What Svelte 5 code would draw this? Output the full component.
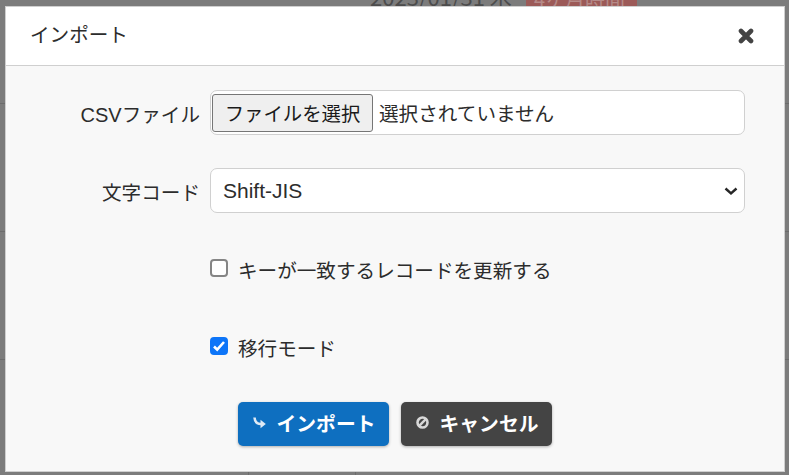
<script>
  let encodings = ['Shift-JIS', 'UTF-8'];
  let encoding = $state('Shift-JIS');
  let update_by_key = $state(false);
  let migrate = $state(true);
</script>

<div class="page">
  <div class="page-head">
    <span class="date">2023/01/31 木</span>
    <span class="badge">4ヶ月時間</span>
  </div>
  <div class="page-row"></div>
  <div class="page-row"></div>
  <div class="page-foot">
    <div class="cell"></div>
    <div class="cell"></div>
  </div>
</div>

<div class="modal">
  <header class="modal-head">
    <h5>インポート</h5>
    <button type="button" class="close" aria-label="閉じる">
      <svg width="16" height="16" viewBox="0 0 16 16">
        <path d="M3 3 L13 13 M13 3 L3 13" stroke="#444" stroke-width="4.6" stroke-linecap="round" fill="none" />
      </svg>
    </button>
  </header>

  <div class="modal-body">
    <div class="field">
      <span class="label"><span class="latin">CSV</span>ファイル</span>
      <div class="file-input">
        <button type="button" class="file-btn">ファイルを選択</button>
        <span class="file-name">選択されていません</span>
      </div>
    </div>

    <div class="field second">
      <span class="label">文字コード</span>
      <select class="select" bind:value={encoding}>
        {#each encodings as e}
          <option value={e}>{e}</option>
        {/each}
      </select>
    </div>

    <label class="check first-check">
      <input type="checkbox" bind:checked={update_by_key} />
      <span>キーが一致するレコードを更新する</span>
    </label>

    <label class="check second-check">
      <input type="checkbox" bind:checked={migrate} />
      <span>移行モード</span>
    </label>

    <div class="actions">
      <button type="button" class="btn primary">
        <svg width="15" height="15" viewBox="0 0 15 15">
          <path d="M2.5 2.5 C2.8 7 5 9 9 9" stroke="#dfeaf5" stroke-width="2.6" fill="none" />
          <path d="M8.5 4.8 L13.8 9 L8.5 13.2 Z" fill="#dfeaf5" />
        </svg>
        インポート
      </button>
      <button type="button" class="btn dark">
        <svg width="15" height="15" viewBox="0 0 15 15">
          <circle cx="7.5" cy="7.5" r="5" stroke="#d8d8d8" stroke-width="2.6" fill="none" />
          <path d="M4.2 10.8 L10.8 4.2" stroke="#d8d8d8" stroke-width="2.4" />
        </svg>
        キャンセル
      </button>
    </div>
  </div>
</div>

<style>
  :global(body) {
    margin: 0;
    height: 475px;
    overflow: hidden;
    background: #7c7c7c;
    font-family: "Noto Sans CJK JP", sans-serif;
    color: #2c2c2c;
  }

  .page {
    width: 789px;
    height: 475px;
    overflow: hidden;
  }

  .page-head {
    height: 104px;
    border-bottom: 1px solid #6c6c6c;
    box-sizing: border-box;
    display: flex;
    align-items: flex-start;
    padding-left: 370px;
    gap: 26px;
  }

  .date {
    width: 130px;
    margin-top: -15px;
    font-size: 22px;
    line-height: 22px;
    color: #4c4c4c;
    white-space: nowrap;
  }

  .badge {
    width: 111px;
    height: 20px;
    box-sizing: border-box;
    margin-top: -12px;
    padding-left: 8px;
    background: #9c5a58;
    color: #b58a88;
    font-size: 20px;
    line-height: 22px;
    white-space: nowrap;
  }

  .page-row {
    height: 128px;
    border-bottom: 1px solid #6c6c6c;
    box-sizing: border-box;
  }

  .page-foot {
    display: flex;
    height: 115px;
    padding-left: 248px;
  }

  .cell {
    width: 106px;
    border-left: 1px solid #6c6c6c;
  }

  .modal {
    position: absolute;
    left: 5px;
    top: 6px;
    width: 780px;
    height: 466px;
    box-sizing: border-box;
    border: 1px solid #cfcfcf;
    background: #f8f8f8;
    display: flex;
    flex-direction: column;
  }

  .modal-head {
    height: 59px;
    flex-shrink: 0;
    box-sizing: border-box;
    background: #fff;
    border-bottom: 1px solid #cfcfcf;
    display: flex;
    align-items: center;
    justify-content: space-between;
    padding: 0 30px 5px 24px;
  }

  h5 {
    margin: 0;
    font-size: 19.6px;
    font-weight: 400;
    line-height: 1.4;
  }

  .close {
    border: 0;
    background: none;
    padding: 0;
    display: flex;
    margin-top: 4px;
  }

  .modal-body {
    padding: 24px 39px 0 0;
    display: flex;
    flex-direction: column;
  }

  .field {
    display: flex;
    align-items: center;
    gap: 10px;
  }

  .second {
    margin-top: 33px;
  }

  .label {
    width: 194px;
    text-align: right;
    font-size: 19.6px;
    line-height: 1.2;
    padding-top: 3px;
    box-sizing: border-box;
    white-space: nowrap;
  }

  .latin {
    font-family: "Liberation Sans", sans-serif;
    font-size: 20px;
  }

  .file-input {
    flex: 1;
    height: 45px;
    box-sizing: border-box;
    background: #fff;
    border: 1px solid #d0d0d0;
    border-radius: 7px;
    display: flex;
    align-items: center;
    padding-left: 1px;
  }

  .file-btn {
    height: 38px;
    width: 161px;
    padding: 0;
    font: inherit;
    font-size: 19.4px;
    color: #1a1a1a;
    background: #efefef;
    border: 1px solid #767676;
    border-radius: 3px;
    white-space: nowrap;
  }

  .file-name {
    margin-left: 6px;
    font-size: 19.6px;
  }

  .select {
    flex: 1;
    height: 45px;
    box-sizing: border-box;
    appearance: none;
    background-color: #fff;
    background-image: url("data:image/svg+xml,%3csvg xmlns='http://www.w3.org/2000/svg' viewBox='0 0 16 12'%3e%3cpath fill='none' stroke='%23272727' stroke-width='2.4' d='M2.5 3.5l5.5 5 5.500-5'/%3e%3c/svg%3e");
    background-repeat: no-repeat;
    background-position: right 5px center;
    background-size: 16px 12px;
    border: 1px solid #d0d0d0;
    border-radius: 7px;
    padding: 0 12px;
    font-family: "Liberation Sans", sans-serif;
    font-size: 21px;
    color: #2c2c2c;
  }

  .check {
    display: flex;
    align-items: center;
    gap: 10px;
    margin-left: 204px;
    font-size: 19.6px;
    line-height: 24px;
  }

  .first-check {
    margin-top: 45px;
  }

  .second-check {
    margin-top: 54px;
  }

  .check input {
    appearance: none;
    margin: 0;
    width: 18px;
    height: 18px;
    box-sizing: border-box;
    border: 2px solid #858585;
    border-radius: 4px;
    background: #fff;
    position: relative;
    top: -2px;
  }

  .check input:checked {
    border-color: #0d75f8;
    background-color: #0d75f8;
    background-image: url("data:image/svg+xml,%3csvg xmlns='http://www.w3.org/2000/svg' viewBox='0 0 14 14'%3e%3cpath fill='none' stroke='%23fff' stroke-width='2.6' d='M2 7.500l3.200 3.200 6.800-7.700'/%3e%3c/svg%3e");
    background-size: 14px 14px;
    background-position: center;
    background-repeat: no-repeat;
  }

  .actions {
    display: flex;
    gap: 12px;
    margin-top: 42px;
    margin-left: 232px;
  }

  .btn {
    height: 44px;
    width: 151px;
    border: 0;
    border-radius: 5px;
    display: flex;
    align-items: center;
    justify-content: center;
    gap: 10px;
    padding: 0 0 4px;
    color: #fff;
    font: inherit;
    font-size: 19.8px;
    font-weight: 700;
    white-space: nowrap;
    box-shadow: 0 1px 3px rgba(0, 0, 0, 0.3);
  }

  .primary {
    background: #0e6fc0;
  }

  .dark {
    background: #444;
  }
</style>
